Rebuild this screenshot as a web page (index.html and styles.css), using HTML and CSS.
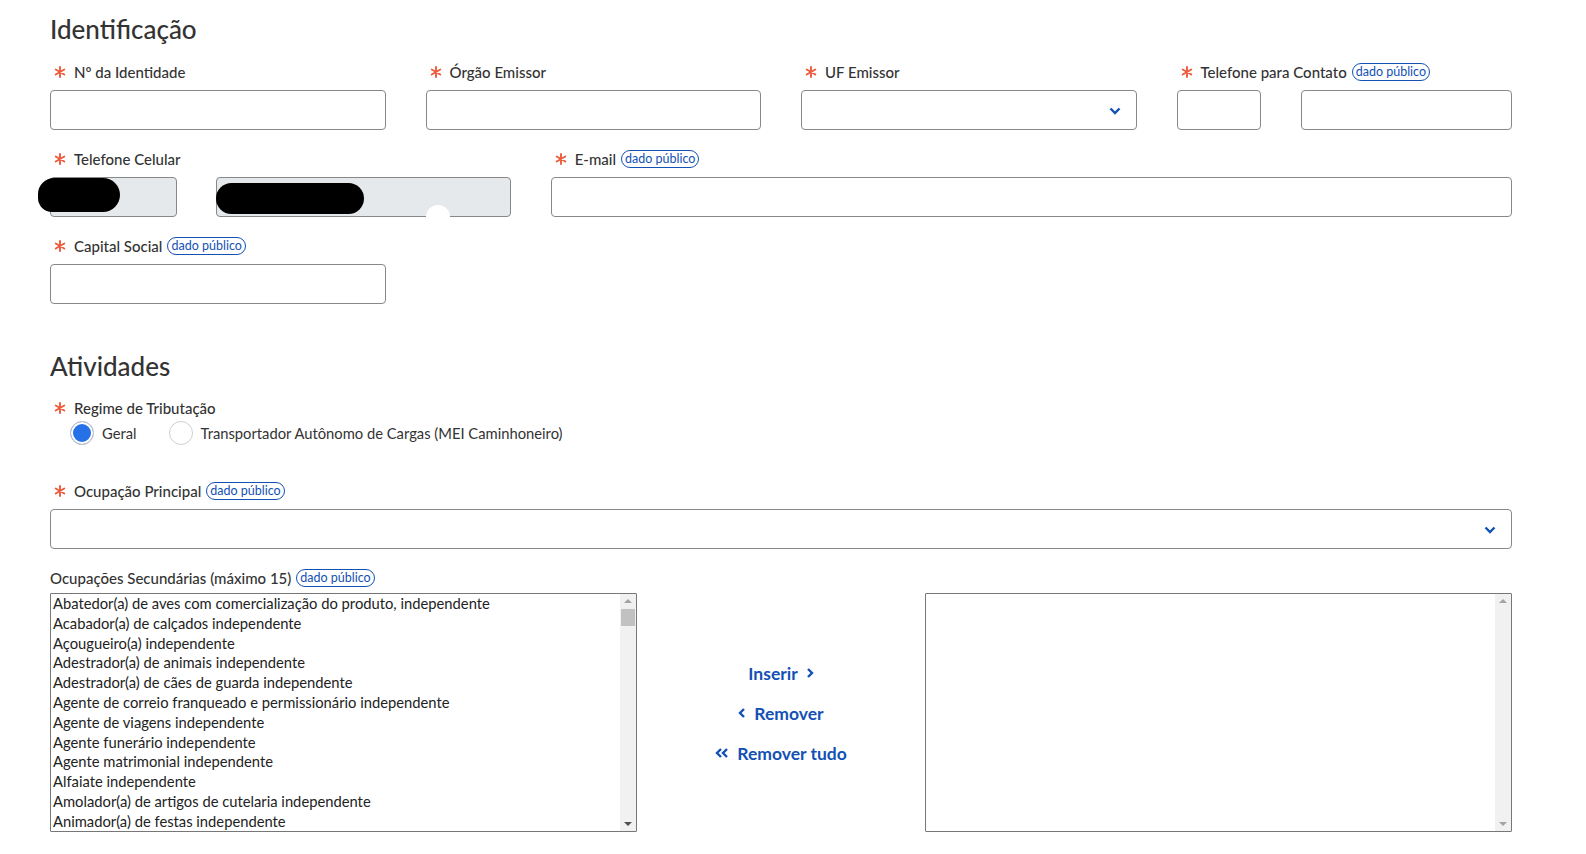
FILE: index.html
```html
<!DOCTYPE html>
<html lang="pt-BR">
<head>
<meta charset="utf-8">
<title>Identificação</title>
<link rel="stylesheet" href="styles.css">
</head>
<body>
<div class="page">
  <h2 class="section-title">Identificação</h2>
  <div class="grid">
    <div class="field span3">
      <label class="label"><span class="req"><svg viewBox="0 0 12 12"><path d="M6 1v10M1.7 3.5l8.6 5M1.7 8.5l8.6-5"/></svg></span>Nº da Identidade</label>
      <div class="input"></div>
    </div>
    <div class="field span3">
      <label class="label"><span class="req"><svg viewBox="0 0 12 12"><path d="M6 1v10M1.7 3.5l8.6 5M1.7 8.5l8.6-5"/></svg></span>Órgão Emissor</label>
      <div class="input"></div>
    </div>
    <div class="field span3">
      <label class="label"><span class="req"><svg viewBox="0 0 12 12"><path d="M6 1v10M1.7 3.5l8.6 5M1.7 8.5l8.6-5"/></svg></span>UF Emissor</label>
      <div class="input select"><svg class="chev" viewBox="0 0 12 8"><path d="M1.5 1.5l4.5 4.5 4.5-4.5"/></svg></div>
    </div>
    <div class="field span3">
      <label class="label"><span class="req"><svg viewBox="0 0 12 12"><path d="M6 1v10M1.7 3.5l8.6 5M1.7 8.5l8.6-5"/></svg></span>Telefone para Contato <span class="badge">dado público</span></label>
      <div class="pair pair-contato">
        <div class="input"></div>
        <div class="input"></div>
      </div>
    </div>

    <div class="field span4">
      <label class="label"><span class="req"><svg viewBox="0 0 12 12"><path d="M6 1v10M1.7 3.5l8.6 5M1.7 8.5l8.6-5"/></svg></span>Telefone Celular</label>
      <div class="pair pair-celular">
        <div class="input disabled"></div>
        <div class="input disabled"></div>
        <span class="blob blob1"></span>
        <span class="blob blob2"></span>
        <span class="bump"></span>
      </div>
    </div>
    <div class="field span8">
      <label class="label"><span class="req"><svg viewBox="0 0 12 12"><path d="M6 1v10M1.7 3.5l8.6 5M1.7 8.5l8.6-5"/></svg></span>E-mail <span class="badge">dado público</span></label>
      <div class="input"></div>
    </div>

    <div class="field span3">
      <label class="label"><span class="req"><svg viewBox="0 0 12 12"><path d="M6 1v10M1.7 3.5l8.6 5M1.7 8.5l8.6-5"/></svg></span>Capital Social <span class="badge">dado público</span></label>
      <div class="input"></div>
    </div>
  </div>

  <h2 class="section-title atividades">Atividades</h2>

  <div class="field">
    <label class="label"><span class="req"><svg viewBox="0 0 12 12"><path d="M6 1v10M1.7 3.5l8.6 5M1.7 8.5l8.6-5"/></svg></span>Regime de Tributação</label>
    <div class="radios">
      <span class="radio checked"></span><span class="radio-text">Geral</span>
      <span class="radio"></span><span class="radio-text">Transportador Autônomo de Cargas (MEI Caminhoneiro)</span>
    </div>
  </div>

  <div class="field principal">
    <label class="label"><span class="req"><svg viewBox="0 0 12 12"><path d="M6 1v10M1.7 3.5l8.6 5M1.7 8.5l8.6-5"/></svg></span>Ocupação Principal <span class="badge">dado público</span></label>
    <div class="input select"><svg class="chev" viewBox="0 0 12 8"><path d="M1.5 1.5l4.5 4.5 4.5-4.5"/></svg></div>
  </div>

  <div class="field secundarias">
    <label class="label">Ocupações Secundárias (máximo 15) <span class="badge">dado público</span></label>
    <div class="dual">
      <div class="listbox">
        <ul class="items">
          <li>Abatedor(a) de aves com comercialização do produto, independente</li>
          <li>Acabador(a) de calçados independente</li>
          <li>Açougueiro(a) independente</li>
          <li>Adestrador(a) de animais independente</li>
          <li>Adestrador(a) de cães de guarda independente</li>
          <li>Agente de correio franqueado e permissionário independente</li>
          <li>Agente de viagens independente</li>
          <li>Agente funerário independente</li>
          <li>Agente matrimonial independente</li>
          <li>Alfaiate independente</li>
          <li>Amolador(a) de artigos de cutelaria independente</li>
          <li>Animador(a) de festas independente</li>
        </ul>
        <div class="scrollbar">
          <span class="arrow up"></span>
          <span class="thumb"></span>
          <span class="track"></span>
          <span class="arrow down"></span>
        </div>
      </div>
      <div class="actions">
        <button class="action">Inserir <svg class="ic" viewBox="0 0 8 12"><path d="M2 2l4 4-4 4"/></svg></button>
        <button class="action"><svg class="ic" viewBox="0 0 8 12"><path d="M6 2L2 6l4 4"/></svg> Remover</button>
        <button class="action"><svg class="ic ic2" viewBox="0 0 14 12"><path d="M6 2L2 6l4 4M12 2L8 6l4 4"/></svg> Remover tudo</button>
      </div>
      <div class="listbox">
        <ul class="items"></ul>
        <div class="scrollbar disabled-bar">
          <span class="arrow up"></span>
          <span class="track"></span>
          <span class="arrow down"></span>
        </div>
      </div>
    </div>
  </div>
</div>
</body>
</html>
```
FILE: styles.css
```css
* { box-sizing: border-box; }
html, body { overflow: hidden; }
body {
  margin: 0;
  background: #fff;
  color: #333;
  font-family: Lato, "Open Sans", sans-serif;
}
.page {
  padding: 13px 74px 0 50px;
}
.section-title {
  margin: 0 0 17px;
  font-size: 26px;
  line-height: 32px;
  font-weight: 500;
  color: #333;
}
.section-title.atividades {
  margin: 46px 0 16px;
}
.grid {
  display: grid;
  grid-template-columns: repeat(12, minmax(0, 1fr));
  column-gap: 40px;
  row-gap: 19px;
}
.span3 { grid-column: span 3; }
.span4 { grid-column: span 4; }
.span8 { grid-column: span 8; }
.label {
  display: flex;
  align-items: center;
  height: 20px;
  margin-bottom: 8px;
  font-size: 15px;
  font-weight: 500;
  color: #333;
  white-space: nowrap;
}
.req {
  display: inline-flex;
  width: 12px;
  height: 12px;
  margin: 0 8px 0 4px;
}
.req svg {
  width: 12px;
  height: 12px;
  fill: none;
  stroke: #ee5a3c;
  stroke-width: 1.9;
  stroke-linecap: round;
}
.badge {
  display: inline-block;
  margin-left: 5px;
  padding: 0 3px;
  height: 18px;
  line-height: 16px;
  border: 1px solid #1351b4;
  border-radius: 9px;
  font-size: 12.5px;
  font-weight: 400;
  color: #1351b4;
}
.input {
  position: relative;
  height: 40px;
  border: 1px solid #888;
  border-radius: 4px;
  background: #fff;
}
.input.disabled {
  background: #e6e9ec;
}
.select .chev {
  position: absolute;
  right: 15px;
  top: 16px;
  width: 12px;
  height: 8px;
  fill: none;
  stroke: #1351b4;
  stroke-width: 2.4;
}
.pair {
  display: grid;
  position: relative;
}
.pair-contato { grid-template-columns: 84px 1fr; column-gap: 40px; }
.pair-celular { grid-template-columns: 127px 1fr; column-gap: 39px; }
.blob {
  position: absolute;
  background: #000;
  border-radius: 17px;
}
.blob1 { left: -12px; top: 1px; width: 82px; height: 34px; border-radius: 16px 17px 17px 14px; }
.blob2 { left: 166px; top: 6px; width: 148px; height: 31px; }
.bump {
  position: absolute;
  left: 376px;
  top: 28px;
  width: 24px;
  height: 24px;
  border-radius: 50%;
  background: #fff;
}
.radios {
  display: flex;
  align-items: center;
  height: 24px;
  margin: -5px 0 0 20px;
  font-size: 14.75px;
  color: #333;
}
.radio {
  width: 24px;
  height: 24px;
  border-radius: 50%;
  border: 1px solid #d0d0d0;
  background: #fff;
  margin-right: 8px;
}
.radio.checked {
  background: #2670e8;
  box-shadow: inset 0 0 0 2px #fff;
  border-color: #c8c8c8;
}
.radio-text { margin-right: 32px; }
.principal { margin-top: 36px; }
.secundarias { margin-top: 19px; }
.secundarias .label { margin-bottom: 5px; }
.dual {
  display: grid;
  grid-template-columns: 587px 1fr 587px;
}
.listbox {
  display: flex;
  height: 239px;
  border: 1px solid #777;
  border-radius: 1px;
  background: #fff;
  overflow: hidden;
}
.items {
  flex: 1;
  min-width: 0;
  margin: 0;
  padding: 0 0 0 2px;
  list-style: none;
  font-size: 14.75px;
  line-height: 19.8px;
  color: #222;
  white-space: nowrap;
}
.scrollbar {
  width: 16px;
  background: #f1f1f1;
  display: flex;
  flex-direction: column;
  align-items: center;
}
.arrow {
  width: 0;
  height: 0;
  border-left: 4px solid transparent;
  border-right: 4px solid transparent;
}
.arrow.up { border-bottom: 4px solid #a3a3a3; margin: 5px 0 6px; }
.arrow.down { border-top: 4px solid #505050; margin: 6px 0 5px; }
.disabled-bar .arrow.down { border-top-color: #a3a3a3; }
.thumb {
  width: 14px;
  height: 17px;
  background: #c1c1c1;
}
.track { flex: 1; }
.actions {
  display: flex;
  flex-direction: column;
  align-items: center;
  padding-top: 69px;
  gap: 18px;
}
.action {
  display: flex;
  align-items: center;
  gap: 8px;
  height: 22px;
  padding: 0;
  border: 0;
  background: none;
  font-family: inherit;
  font-size: 17.5px;
  font-weight: 700;
  color: #1351b4;
  cursor: pointer;
}
.ic {
  width: 8px;
  height: 12px;
  fill: none;
  stroke: #1351b4;
  stroke-width: 2.4;
}
.ic2 { width: 14px; }
```
